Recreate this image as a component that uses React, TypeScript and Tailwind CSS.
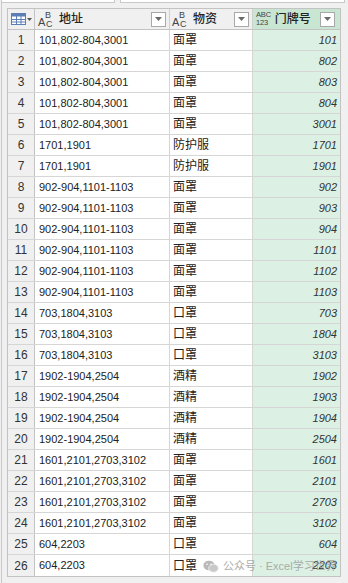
import React from "react";

const rows: [string, string, string][] = [
  ["101,802-804,3001", "面罩", "101"],
  ["101,802-804,3001", "面罩", "802"],
  ["101,802-804,3001", "面罩", "803"],
  ["101,802-804,3001", "面罩", "804"],
  ["101,802-804,3001", "面罩", "3001"],
  ["1701,1901", "防护服", "1701"],
  ["1701,1901", "防护服", "1901"],
  ["902-904,1101-1103", "面罩", "902"],
  ["902-904,1101-1103", "面罩", "903"],
  ["902-904,1101-1103", "面罩", "904"],
  ["902-904,1101-1103", "面罩", "1101"],
  ["902-904,1101-1103", "面罩", "1102"],
  ["902-904,1101-1103", "面罩", "1103"],
  ["703,1804,3103", "口罩", "703"],
  ["703,1804,3103", "口罩", "1804"],
  ["703,1804,3103", "口罩", "3103"],
  ["1902-1904,2504", "酒精", "1902"],
  ["1902-1904,2504", "酒精", "1903"],
  ["1902-1904,2504", "酒精", "1904"],
  ["1902-1904,2504", "酒精", "2504"],
  ["1601,2101,2703,3102", "面罩", "1601"],
  ["1601,2101,2703,3102", "面罩", "2101"],
  ["1601,2101,2703,3102", "面罩", "2703"],
  ["1601,2101,2703,3102", "面罩", "3102"],
  ["604,2203", "口罩", "604"],
  ["604,2203", "口罩", "2203"],
];

const FONT = { fontFamily: '"Liberation Sans", "Noto Sans CJK SC", sans-serif' };

function Drop() {
  return (
    <div className="w-[15px] h-[15px] bg-white border border-[#a8a8a8] flex items-center justify-center shrink-0">
      <svg width="7" height="4" viewBox="0 0 7 4">
        <path d="M0 0 L7 0 L3.5 4 Z" fill="#6a6a6a" />
      </svg>
    </div>
  );
}

function AbcIcon() {
  return (
    <div className="relative w-[16px] h-[17px] text-[#444] leading-none shrink-0">
      <span className="absolute left-0 top-[6px] text-[11px]">A</span>
      <span className="absolute left-[7px] top-0 text-[9px]">B</span>
      <span className="absolute left-[8px] top-[9px] text-[9px]">C</span>
    </div>
  );
}

function NumIcon() {
  return (
    <div className="flex flex-col text-[7.5px] leading-[8px] text-[#444] shrink-0 tracking-tight">
      <span>ABC</span>
      <span>123</span>
    </div>
  );
}

function TableIcon() {
  return (
    <div className="flex items-center gap-[1px]">
      <svg width="15" height="12" viewBox="0 0 15 12">
        <rect x="0.5" y="0.5" width="14" height="11" fill="#fff" stroke="#5b7fb5" />
        <rect x="0.5" y="0.5" width="14" height="3" fill="#5b7fb5" />
        <line x1="5.5" y1="3" x2="5.5" y2="12" stroke="#5b7fb5" />
        <line x1="10" y1="3" x2="10" y2="12" stroke="#5b7fb5" />
        <line x1="0" y1="6.5" x2="15" y2="6.5" stroke="#5b7fb5" />
        <line x1="0" y1="9" x2="15" y2="9" stroke="#5b7fb5" />
      </svg>
      <svg width="5" height="3" viewBox="0 0 5 3">
        <path d="M0 0 L5 0 L2.5 3 Z" fill="#555" />
      </svg>
    </div>
  );
}

export default function App() {
  return (
    <div className="relative w-[348px] h-[583px] bg-[#f0f0f0] overflow-hidden" style={FONT}>
      <div className="absolute left-[1px] top-0 bottom-0 w-px bg-[#c9c9c9]" />
      <div className="flex h-[3px] pl-[2px] gap-[5px]">
        <div className="w-[113px] bg-white border-b border-r border-[#c9c9c9]" />
        <div className="w-[225px] bg-white border-b border-l border-r border-[#c9c9c9]" />
      </div>
      <div className="pl-[7px] pt-[5px]">
        <div className="w-[334px] border border-[#c3c3c3] bg-white">
          <div className="flex h-[21px] border-b border-[#c3c3c3] text-[#222]">
            <div className="w-[27px] bg-[#f0f0f0] border-r border-[#c3c3c3] flex items-center justify-center">
              <TableIcon />
            </div>
            <div className="w-[135px] bg-[#f0f0f0] border-r border-[#d0d0d0] flex items-center pl-[3px] pr-[3px] gap-[5px]">
              <AbcIcon />
              <span className="text-[12px] font-medium flex-1">地址</span>
              <Drop />
            </div>
            <div className="w-[83px] bg-[#f0f0f0] border-r border-[#d0d0d0] flex items-center pl-[2px] pr-[3px] gap-[5px]">
              <AbcIcon />
              <span className="text-[12px] font-medium flex-1">物资</span>
              <Drop />
            </div>
            <div className="w-[87px] bg-[#c9e6d3] flex items-center pl-[3px] pr-[5px] gap-[4px]">
              <NumIcon />
              <span className="text-[12px] font-medium flex-1">门牌号</span>
              <Drop />
            </div>
          </div>
          {rows.map((r, i) => (
            <div key={i} className="flex h-[21px] border-b border-[#d6d6d6] last:border-b-0 text-[11px] text-[#222] leading-none">
              <div className="w-[27px] bg-[#f0f0f0] border-r border-[#c3c3c3] flex items-center justify-center text-[12px] text-[#333]">
                {i + 1}
              </div>
              <div className="w-[135px] border-r border-[#d6d6d6] flex items-center pl-[4px]">{r[0]}</div>
              <div className="w-[83px] border-r border-[#d6d6d6] flex items-center pl-[3px] text-[12px]">{r[1]}</div>
              <div className="w-[87px] bg-[#dcf1e4] flex items-center justify-end pr-[3px] italic text-[#333]">{r[2]}</div>
            </div>
          ))}
        </div>
      </div>
      <div className="absolute left-[203px] top-[558px] flex items-center gap-[4px] text-[11px] text-[#9a9a9a] opacity-80">
        <svg width="16" height="13" viewBox="0 0 16 13">
          <ellipse cx="6" cy="5.5" rx="5.6" ry="4.8" fill="#a8a8a8" />
          <ellipse cx="10.5" cy="8.2" rx="4.8" ry="4" fill="#bcbcbc" stroke="#f0f0f0" strokeWidth="0.8" />
          <circle cx="4" cy="4.3" r="0.8" fill="#fff" />
          <circle cx="8" cy="4.3" r="0.8" fill="#fff" />
        </svg>
        <span>公众号 · Excel学习世界</span>
      </div>
    </div>
  );
}
